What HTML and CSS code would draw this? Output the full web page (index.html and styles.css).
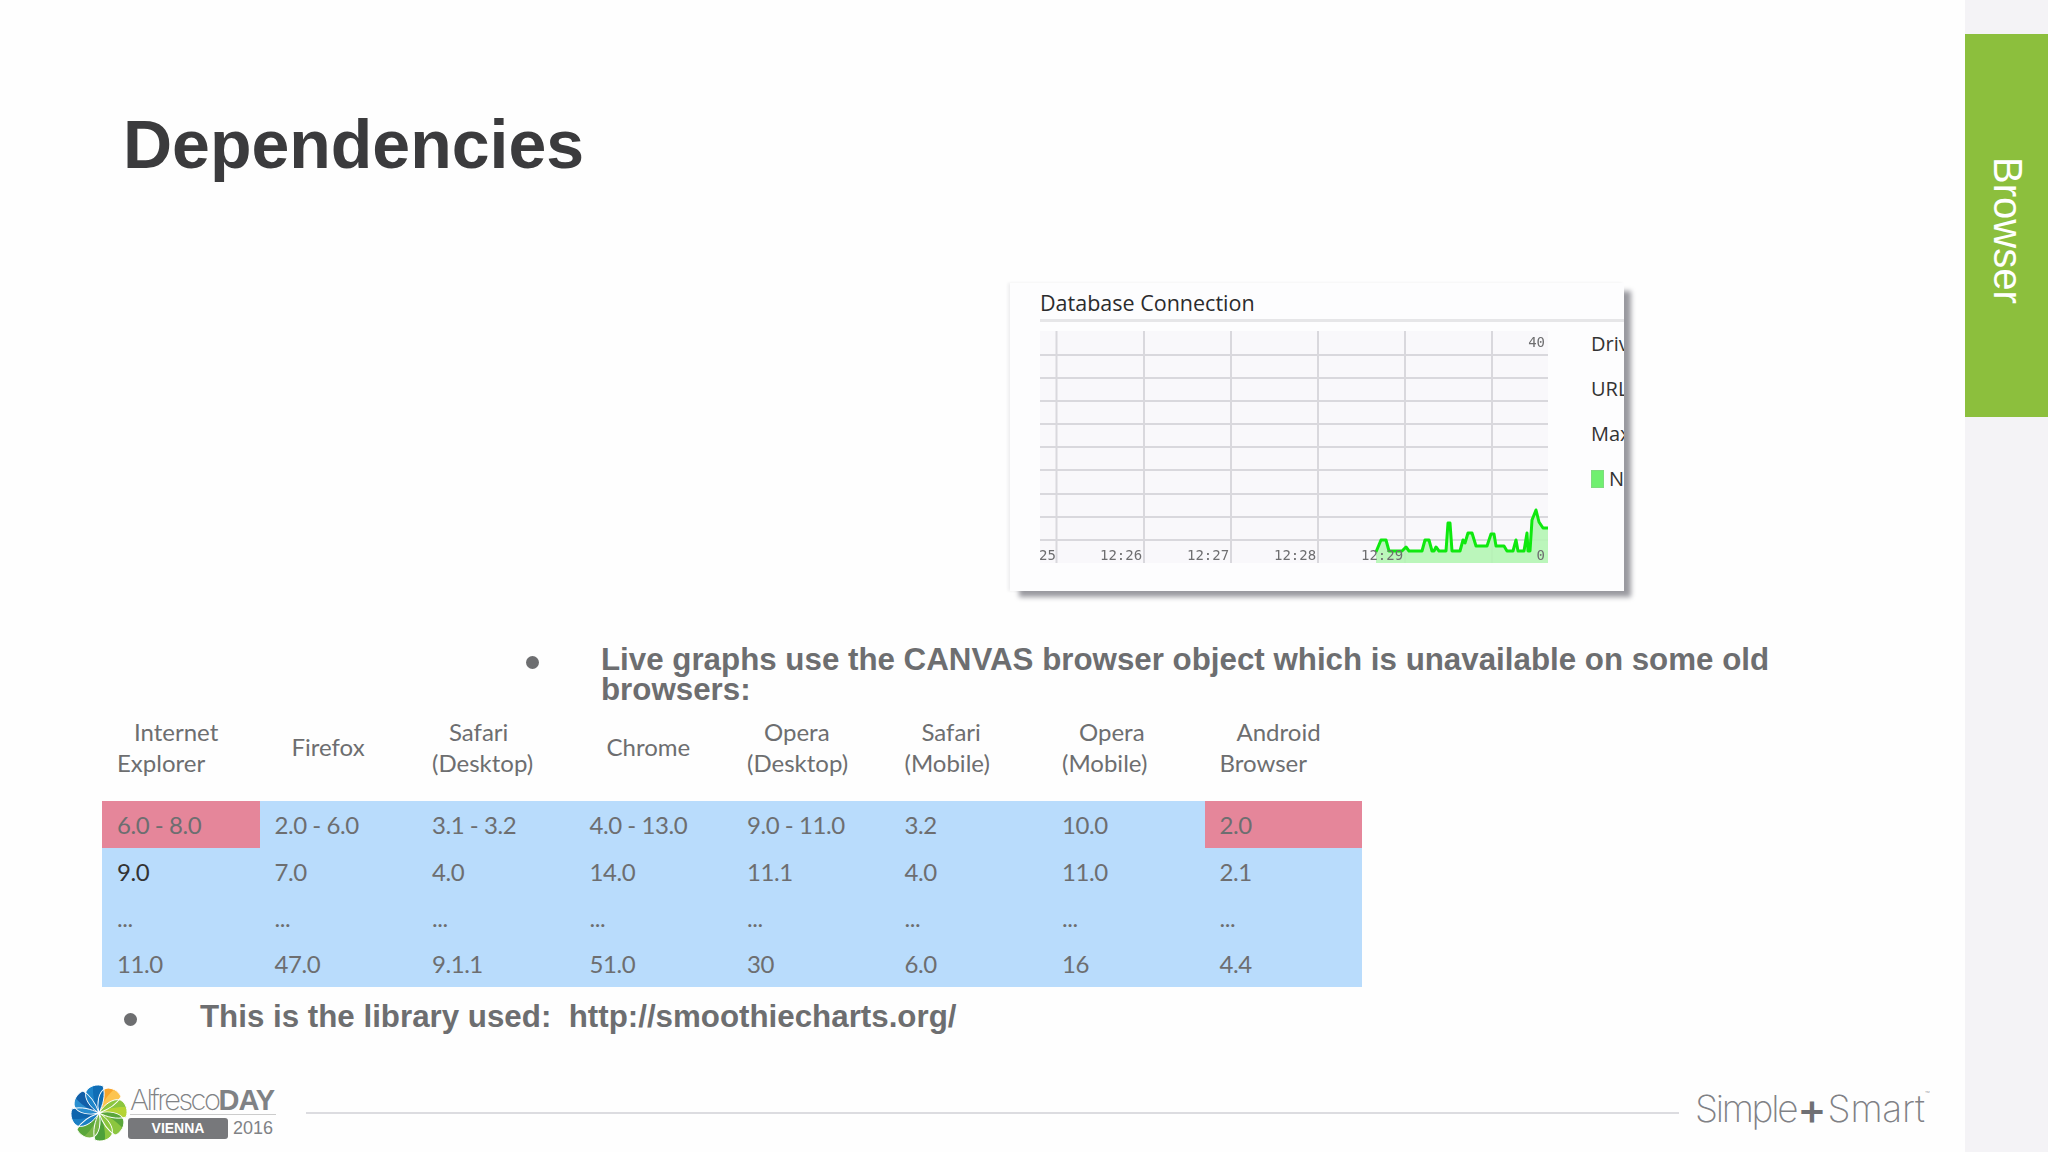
FILE: index.html
```html
<!DOCTYPE html>
<html lang="en">
<head>
<meta charset="utf-8">
<title>Dependencies</title>
<link rel="stylesheet" href="styles.css">
</head>
<body>
<div class="slide">
  <main class="content">
    <h1 class="title">Dependencies</h1>
    <figure class="shot">
      <div class="shot-title">Database Connection</div>
      <div class="shot-rule"></div>
      <div class="shot-body">
        <svg class="chart" width="508" height="232" viewBox="0 0 508 232">
          <rect width="508" height="232" fill="#f9f8fb"/>
          <g class="grid">
            <path d="M0 24H508M0 47H508M0 70H508M0 93H508M0 116H508M0 139H508M0 163H508M0 186H508M0 209H508"/>
            <path d="M16.5 0V232M104 0V232M191 0V232M278 0V232M365 0V232M452 0V232"/>
          </g>
          <path class="area" d="M336 232V221L341 209L346 209L349 220L362 220L366 216L369 220L382 220L385 209L389 209L392 220L394 220L396 216L399 220L406 220L408 192L410 192L412 220L420 220L423 209L425 212L428 202L432 202L436 215L447 215L451 203L454 203L456 215L464 215L467 220L473 220L476 209L478 220L484 220L487 202L488 220L490 220L492 189L496 179L499 191L503 197L508 197V232Z"/>
          <path class="line" d="M336 221L341 209L346 209L349 220L362 220L366 216L369 220L382 220L385 209L389 209L392 220L394 220L396 216L399 220L406 220L408 192L410 192L412 220L420 220L423 209L425 212L428 202L432 202L436 215L447 215L451 203L454 203L456 215L464 215L467 220L473 220L476 209L478 220L484 220L487 202L488 220L490 220L492 189L496 179L499 191L503 197L508 197"/>
          <g class="tick">
            <text x="-1" y="229">25</text>
            <text x="60" y="229">12:26</text>
            <text x="147" y="229">12:27</text>
            <text x="234" y="229">12:28</text>
            <text x="321" y="229">12:29</text>
            <text x="505" y="16" class="end">40</text>
            <text x="505" y="229" class="end">0</text>
          </g>
        </svg>
        <ul class="shot-legend">
          <li>Driver</li>
          <li>URL</li>
          <li>Max</li>
          <li class="legend-n"><span class="swatch"></span>N</li>
        </ul>
      </div>
    </figure>
    <p class="bullet bullet-first"><span class="dot"></span><span>Live graphs use the CANVAS browser object which is unavailable on some old browsers:</span></p>
    <table class="support">
      <thead>
        <tr><th>Internet Explorer</th><th>Firefox</th><th>Safari (Desktop)</th><th>Chrome</th><th>Opera (Desktop)</th><th>Safari (Mobile)</th><th>Opera (Mobile)</th><th>Android Browser</th></tr>
      </thead>
      <tbody>
        <tr><td class="old">6.0 - 8.0</td><td>2.0 - 6.0</td><td>3.1 - 3.2</td><td>4.0 - 13.0</td><td>9.0 - 11.0</td><td>3.2</td><td>10.0</td><td class="old">2.0</td></tr>
        <tr><td class="dark">9.0</td><td>7.0</td><td>4.0</td><td>14.0</td><td>11.1</td><td>4.0</td><td>11.0</td><td>2.1</td></tr>
        <tr class="gap"><td>...</td><td>...</td><td>...</td><td>...</td><td>...</td><td>...</td><td>...</td><td>...</td></tr>
        <tr><td>11.0</td><td>47.0</td><td>9.1.1</td><td>51.0</td><td>30</td><td>6.0</td><td>16</td><td>4.4</td></tr>
      </tbody>
    </table>
    <p class="bullet bullet-second"><span class="dot"></span><span>This is the library used:&nbsp; http://smoothiecharts.org/</span></p>
    <footer class="footer">
      <svg class="flower" width="58" height="58" viewBox="-29 -29 58 58" aria-hidden="true">
        <defs>
          <path id="petal" d="M0 0C-7-7-11-18-7-24C-3-29 6-29 11-25C11-15 6-7 0 0Z"/>
          <path id="petal-in" d="M0 0C-2-8-2-17 1-27C5-28 8-27 11-25C11-15 6-7 0 0Z"/>
        </defs>
        <g class="petals">
          <g transform="rotate(30)"><use href="#petal" fill="#f9a52b"/><use href="#petal-in" fill="#fdc44f"/></g>
          <g transform="rotate(75)"><use href="#petal" fill="#8cc63f"/><use href="#petal-in" fill="#b5d334"/></g>
          <g transform="rotate(120)"><use href="#petal" fill="#5aa63a"/><use href="#petal-in" fill="#8cc63f"/></g>
          <g transform="rotate(165)"><use href="#petal" fill="#8cc63f"/><use href="#petal-in" fill="#4ea03a"/></g>
          <g transform="rotate(210)"><use href="#petal" fill="#7ab648"/><use href="#petal-in" fill="#5aa63a"/></g>
          <g transform="rotate(255)"><use href="#petal" fill="#1b7fc4"/><use href="#petal-in" fill="#0f65ad"/></g>
          <g transform="rotate(300)"><use href="#petal" fill="#2a8fd0"/><use href="#petal-in" fill="#125fa8"/></g>
          <g transform="rotate(345)"><use href="#petal" fill="#1d84c9"/><use href="#petal-in" fill="#0f6db5"/></g>
        </g>
        <g class="petal-gaps">
          <use href="#petal" transform="rotate(30)"/>
          <use href="#petal" transform="rotate(75)"/>
          <use href="#petal" transform="rotate(120)"/>
          <use href="#petal" transform="rotate(165)"/>
          <use href="#petal" transform="rotate(210)"/>
          <use href="#petal" transform="rotate(255)"/>
          <use href="#petal" transform="rotate(300)"/>
          <use href="#petal" transform="rotate(345)"/>
        </g>
      </svg>
      <div class="brand">
        <div class="brand-name">Alfresco<b>DAY</b></div>
        <div class="brand-sub"><span class="pill">VIENNA</span><span class="year">2016</span></div>
      </div>
      <div class="foot-rule"></div>
      <div class="tagline"><span class="tag-a">Simple</span><span class="plus">+</span><span class="tag-b">Smart</span><sup>™</sup></div>
    </footer>
  </main>
  <aside class="side">
    <div class="tab"><span class="tab-label">Browser</span></div>
  </aside>
</div>
</body>
</html>
```

FILE: styles.css
```css
* { box-sizing: border-box; }
html, body { margin: 0; padding: 0; }
body { width: 2048px; height: 1152px; overflow: hidden; background: #fff; font-family: "Liberation Sans", Arial, sans-serif; }
.slide { display: flex; width: 2048px; height: 1152px; }
.content { width: 1965px; height: 1152px; display: flex; flex-direction: column; background: #fefefe; }
.side { width: 83px; height: 1152px; background: #f4f3f6; padding-top: 34px; }
.tab { height: 383px; background: #8cbf3d; display: flex; justify-content: center; padding-top: 123px; padding-left: 3px; }
.tab-label { writing-mode: vertical-rl; font-size: 40px; line-height: 46px; height: 150px; color: #fff; }

.title { margin: 100px 0 0 123px; font-size: 68px; line-height: 88px; font-weight: 700; color: #3b3b3d; }

.shot { position: relative; margin: 95px 0 0 1010px; width: 614px; height: 308px; background: #fdfdfe; padding: 0 0 0 30px; box-shadow: 8px 7px 5px -1px #9a9aa0, -2px 0 3px #eeeeef; }
.shot-title { padding-top: 5px; font-family: "Open Sans", sans-serif; font-size: 21.5px; line-height: 29px; color: #2b2b2d; }
.shot-rule { height: 3px; margin-top: 2px; background: #e6e6e8; }
.shot-body { display: flex; margin-top: 9px; }
.chart { display: block; flex: none; filter: blur(.5px); }
.grid path { fill: none; stroke: #d9d8dd; stroke-width: 2; }
.area { fill: #b4f5b4; opacity: .9; }
.line { fill: none; stroke: #0fe80f; stroke-width: 3; stroke-linejoin: round; }
.tick text { font-family: "DejaVu Sans Mono", monospace; font-size: 14px; fill: #6e6e70; }
.tick .end { text-anchor: end; }
.shot-legend { list-style: none; margin: 0; padding: 0 0 0 43px; width: 76px; overflow: hidden; font-family: "Open Sans", sans-serif; font-size: 20px; color: #333; white-space: nowrap; }
.shot-legend li { height: 45px; line-height: 26px; }
.shot-legend .legend-n { display: flex; align-items: center; height: 26px; }
.swatch { width: 13px; height: 18px; margin-right: 5px; background: #70f070; border: 1px solid #7fdc7f; flex: none; }

.bullet { display: flex; margin: 0; font-size: 31.3px; line-height: 30px; font-weight: 700; color: #6d6e70; }
.bullet-first { margin: 54px 0 0 526px; width: 1250px; }
.bullet-second { margin: 15px 0 0 124px; }
.dot { flex: none; width: 13px; height: 13px; margin-top: 11px; border-radius: 50%; background: #6d6e70; }
.bullet-first .dot { margin-right: 62px; }
.bullet-second .dot { margin-right: 63px; }

.support { margin: 0 0 0 102px; width: 1260px; border-collapse: collapse; table-layout: fixed; font-family: Lato, sans-serif; font-size: 24px; color: #6d6e70; }
.support th { height: 96px; padding: 0 15px 13px; font-weight: 400; text-align: left; text-indent: 17px; line-height: 31px; vertical-align: middle; }
.support td { height: 47px; padding: 0 15px; background: #b9dcfc; letter-spacing: -.45px; }
.support .gap td { height: 45px; }
.support td.old { background: #e5869a; }
.support td.dark { color: #333; }

.footer { margin: 52px 0 0 70px; display: flex; align-items: center; height: 58px; }
.flower { flex: none; }
.petal-gaps use { fill: none; stroke: #fff; stroke-width: .9; }
.brand { margin-left: 2px; width: 146px; align-self: flex-start; color: #808285; }
.brand-name { font-family: Inter, sans-serif; font-size: 29px; line-height: 27px; letter-spacing: -2.5px; font-weight: 200; border-bottom: 1px solid #ccc; padding-top: 2px; white-space: nowrap; }
.brand-name b { font-family: "Liberation Sans", sans-serif; font-weight: 700; letter-spacing: -1px; }
.brand-sub { display: flex; align-items: center; gap: 5px; margin: 3px -2px 0 -2px; }
.pill { width: 100px; height: 21px; border-radius: 3px; background: #77787b; color: #fff; font-size: 14px; font-weight: 700; line-height: 21px; text-align: center; }
.year { font-size: 18px; line-height: 21px; }
.foot-rule { flex: none; width: 1373px; height: 2px; margin-left: 30px; background: #dcdce0; }
.tagline { margin-left: 16px; padding-bottom: 8px; font-family: Inter, sans-serif; font-weight: 200; font-size: 37px; line-height: 44px; color: #808185; white-space: nowrap; display: flex; }
.tag-a { letter-spacing: -2.3px; }
.tag-b { letter-spacing: -.2px; }
.plus { color: #6f7074; font-weight: 500; font-size: 44px; margin: 0 1px; }
.tagline sup { font-size: 8px; line-height: 14px; }
```
